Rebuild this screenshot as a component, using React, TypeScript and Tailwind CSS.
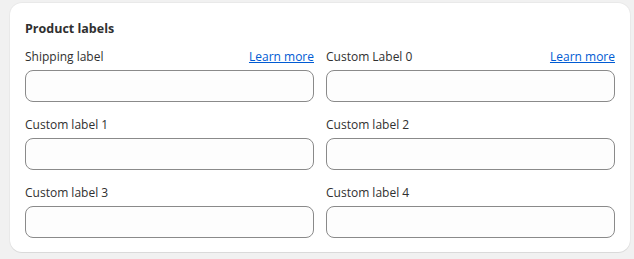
import React from "react";

type Field = { label: string; learnMore?: boolean };

const fields: Field[] = [
  { label: "Shipping label", learnMore: true },
  { label: "Custom Label 0", learnMore: true },
  { label: "Custom label 1" },
  { label: "Custom label 2" },
  { label: "Custom label 3" },
  { label: "Custom label 4" },
];

const TextField: React.FC<Field> = ({ label, learnMore }) => (
  <div className="flex flex-col">
    <div className="flex items-end justify-between h-5 mb-1">
      <label className="text-[12px] leading-[18px] text-[#303030]">{label}</label>
      {learnMore && (
        <a href="#" className="text-[12px] leading-[18px] text-[#005bd3] underline">
          Learn more
        </a>
      )}
    </div>
    <input
      type="text"
      className="h-8 w-full rounded-lg border border-[#8a8a8a] bg-[#fdfdfd] px-3 text-[13px] outline-none"
    />
  </div>
);

export default function App() {
  return (
    <div
      className="min-h-[259px] w-[634px] bg-[#f1f1f1] pl-[10px] pt-[3px]"
      style={{ fontFamily: '"Open Sans", "Noto Sans", sans-serif' }}
    >
      <div className="w-[620px] rounded-xl bg-white px-[15px] pt-4 pb-[14px] shadow-[0_1px_0_0_rgba(26,26,26,0.07),0_0_0_1px_rgba(0,0,0,0.03)]">
        <h2 className="text-[12.5px] font-bold leading-5 text-[#303030] mb-[7px] pt-px -mt-px">Product labels</h2>
        <div className="grid grid-cols-2 gap-x-3 gap-y-3">
          {fields.map((f) => (
            <TextField key={f.label} {...f} />
          ))}
        </div>
      </div>
    </div>
  );
}
